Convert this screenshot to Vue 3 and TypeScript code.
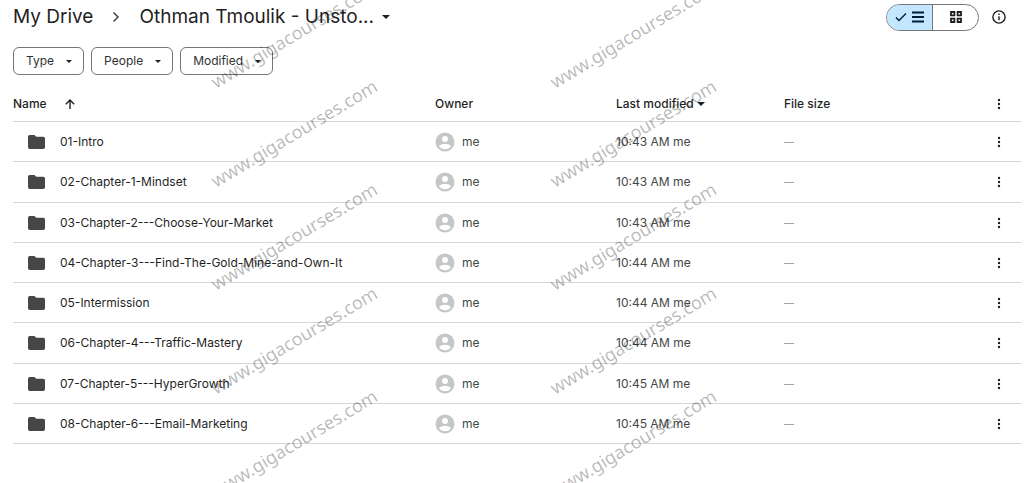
<script setup lang="ts">
interface Folder {
  name: string
  time: string
}

const filters: string[] = ['Type', 'People', 'Modified']

const folders: Folder[] = [
  { name: '01-Intro', time: '10:43 AM' },
  { name: '02-Chapter-1-Mindset', time: '10:43 AM' },
  { name: '03-Chapter-2---Choose-Your-Market', time: '10:43 AM' },
  { name: '04-Chapter-3---Find-The-Gold-Mine-and-Own-It', time: '10:44 AM' },
  { name: '05-Intermission', time: '10:44 AM' },
  { name: '06-Chapter-4---Traffic-Mastery', time: '10:44 AM' },
  { name: '07-Chapter-5---HyperGrowth', time: '10:45 AM' },
  { name: '08-Chapter-6---Email-Marketing', time: '10:45 AM' },
]

// Anchor points of the repeated diagonal mark
const markColumns: number[] = [216, 555]
const markRows: number[] = [89, 188, 291, 395, 498]
</script>

<template>
  <main class="drive">
    <header class="top">
      <nav class="crumbs" aria-label="Breadcrumb">
        <a class="crumb" href="#">My Drive</a>
        <svg class="chevron" viewBox="0 0 8 12" aria-hidden="true"><path d="M1.5 1.5 6 6l-4.500 4.500" /></svg>
        <button class="crumb current" type="button">
          <span>Othman Tmoulik - Unsto...</span>
          <svg class="caret big" viewBox="0 0 8 4" aria-hidden="true"><path d="M0 0h8L4 4z" /></svg>
        </button>
      </nav>
      <div class="tools">
        <div class="switch" role="group" aria-label="Layout">
          <button class="seg on" type="button" aria-label="List layout" aria-pressed="true">
            <svg class="check" viewBox="0 0 12 10" aria-hidden="true"><path d="M1 5.500 4 8.500 11 1.500" /></svg>
            <svg class="list" viewBox="0 0 12 12" aria-hidden="true"><path d="M0 1.500h12M0 6h12M0 10.500h12" /></svg>
          </button>
          <button class="seg" type="button" aria-label="Grid layout" aria-pressed="false">
            <svg class="grid" viewBox="0 0 12 12" aria-hidden="true">
              <path d="M1 1h3.400v3.400H1zM7.600 1H11v3.400H7.600zM1 7.600h3.400V11H1zM7.600 7.600H11V11H7.600z" />
            </svg>
          </button>
        </div>
        <button class="info" type="button" aria-label="View details">
          <svg viewBox="0 0 14 14" aria-hidden="true">
            <circle cx="7" cy="7" r="6.100" />
            <path d="M7 6.200v4.100M7 3.600v1.400" />
          </svg>
        </button>
      </div>
    </header>

    <div class="filters">
      <button v-for="f in filters" :key="f" class="chip" type="button">
        {{ f }}
        <svg class="caret" viewBox="0 0 8 4" aria-hidden="true"><path d="M0 0h8L4 4z" /></svg>
      </button>
    </div>

    <table class="files">
      <colgroup>
        <col />
        <col class="c-owner" />
        <col class="c-modified" />
        <col class="c-size" />
        <col class="c-more" />
      </colgroup>
      <thead>
        <tr>
          <th scope="col">
            <div class="cell name-head">
              Name
              <svg class="arrow" viewBox="0 0 10 10" aria-hidden="true"><path d="M5 10V1M.8 5.200 5 1l4.200 4.200" /></svg>
            </div>
          </th>
          <th scope="col">Owner</th>
          <th scope="col">
            <div class="cell sort-head">
              Last modified
              <svg class="caret big" viewBox="0 0 8 4" aria-hidden="true"><path d="M0 0h8L4 4z" /></svg>
            </div>
          </th>
          <th scope="col">File size</th>
          <th scope="col">
            <button class="more" type="button" aria-label="More options">
              <svg viewBox="0 0 4 12" aria-hidden="true">
                <circle cx="2" cy="2" r="1.200" /><circle cx="2" cy="6" r="1.200" /><circle cx="2" cy="10" r="1.200" />
              </svg>
            </button>
          </th>
        </tr>
      </thead>
      <tbody>
        <tr v-for="f in folders" :key="f.name">
          <td>
            <div class="cell name">
              <svg class="folder" viewBox="0 0 17 14" aria-hidden="true">
                <path d="M1.700 0H6.500L8.200 1.700H15.300A1.700 1.700 0 0 1 17 3.400V12.300A1.700 1.700 0 0 1 15.300 14H1.700A1.700 1.700 0 0 1 0 12.300V1.700A1.700 1.700 0 0 1 1.700 0z" />
              </svg>
              {{ f.name }}
            </div>
          </td>
          <td>
            <div class="cell owner">
              <svg class="avatar" viewBox="0 0 20 20" aria-hidden="true">
                <circle class="disc" cx="10" cy="10" r="9.500" />
                <circle class="person" cx="10" cy="7" r="3" />
                <path class="person" d="M4 14.300C5.200 12.400 7.700 11.700 10 11.700s4.800.7 6 2.600C14.700 16.200 12.500 17.300 10 17.300S5.300 16.200 4 14.300z" />
              </svg>
              me
            </div>
          </td>
          <td>{{ f.time }} me</td>
          <td class="size">—</td>
          <td>
            <button class="more" type="button" :aria-label="'Actions for ' + f.name">
              <svg viewBox="0 0 4 12" aria-hidden="true">
                <circle cx="2" cy="2" r="1.200" /><circle cx="2" cy="6" r="1.200" /><circle cx="2" cy="10" r="1.200" />
              </svg>
            </button>
          </td>
        </tr>
      </tbody>
    </table>

    <svg class="marks" aria-hidden="true">
      <template v-for="x in markColumns" :key="x">
        <text v-for="y in markRows" :key="y" :transform="`translate(${x} ${y}) rotate(-31)`">www.gigacourses.com</text>
      </template>
    </svg>
  </main>
</template>

<style>
body {
  margin: 0;
  background: #fff;
}
</style>

<style scoped>
.drive {
  position: relative;
  min-height: 100vh;
  box-sizing: border-box;
  padding: 0 3px 0 13px;
  overflow: hidden;
  font-family: Inter, "Open Sans", sans-serif;
  font-size: 12px;
  line-height: 16px;
  color: #1f1f1f;
}
button {
  margin: 0;
  padding: 0;
  border: 0;
  background: none;
  font: inherit;
  color: inherit;
}
svg {
  display: block;
  flex: none;
}
.top {
  display: flex;
  align-items: center;
  justify-content: space-between;
  height: 34px;
}
.crumbs,
.tools,
.filters,
.cell {
  display: flex;
  align-items: center;
}
.crumb {
  font-size: 19px;
  line-height: 24px;
  color: #1f1f1f;
  text-decoration: none;
}
.chevron {
  width: 8px;
  height: 12px;
  margin: 0 19px;
  fill: none;
  stroke: #444746;
  stroke-width: 1.5;
}
.current {
  display: flex;
  align-items: center;
  gap: 8px;
}
.caret {
  width: 6px;
  height: 3px;
  fill: #1f1f1f;
}
.caret.big {
  width: 8px;
  height: 4px;
}
.tools {
  gap: 13px;
  padding-right: 15px;
}
.switch {
  display: flex;
  box-sizing: border-box;
  width: 93px;
  height: 27px;
  border: 1px solid #747775;
  border-radius: 14px;
  overflow: hidden;
}
.seg {
  flex: 1;
  display: flex;
  align-items: center;
  justify-content: center;
  gap: 5px;
}
.seg.on {
  background: #c2e7ff;
  border-right: 1px solid #747775;
}
.check {
  width: 12px;
  height: 10px;
  fill: none;
  stroke: #001d35;
  stroke-width: 1.4;
}
.list {
  width: 12px;
  height: 12px;
  fill: none;
  stroke: #001d35;
  stroke-width: 1.8;
}
.grid {
  width: 12px;
  height: 12px;
  fill: none;
  stroke: #1f1f1f;
  stroke-width: 1.8;
}
.info svg {
  width: 14px;
  height: 14px;
  fill: none;
  stroke: #1f1f1f;
  stroke-width: 1.4;
}
.filters {
  gap: 7px;
  padding-top: 13px;
}
.chip {
  display: flex;
  align-items: center;
  gap: 12px;
  height: 28px;
  padding: 0 11px 0 12px;
  border: 1px solid #747775;
  border-radius: 6px;
  color: #303332;
}
.files {
  width: 100%;
  margin-top: 12px;
  border-collapse: collapse;
  table-layout: fixed;
}
.c-owner {
  width: 181px;
}
.c-modified {
  width: 168px;
}
.c-size {
  width: 205px;
}
.c-more {
  width: 32px;
}
th,
td {
  padding: 0;
  text-align: left;
  border-bottom: 1px solid #d5d7d6;
}
th {
  height: 34px;
  font-weight: 500;
}
td {
  height: 39px;
  color: #444746;
}
tbody tr:nth-child(4n + 2) td {
  height: 40px;
}
.name-head {
  gap: 18px;
}
.sort-head {
  gap: 3px;
}
.arrow {
  width: 10px;
  height: 10px;
  fill: none;
  stroke: #1f1f1f;
  stroke-width: 1.4;
}
.name {
  gap: 15px;
  padding-left: 15px;
  color: #1f1f1f;
  white-space: nowrap;
}
.folder {
  width: 17px;
  height: 14px;
  fill: #444746;
}
.owner {
  gap: 7px;
}
.avatar {
  width: 20px;
  height: 20px;
}
.disc {
  fill: #c4c7c5;
}
.person {
  fill: #fff;
}
.size {
  font-size: 10px;
  color: #8e918f;
}
.more {
  display: block;
  padding: 2px 8px;
}
.more svg {
  width: 4px;
  height: 12px;
  fill: #1f1f1f;
}
.marks {
  position: absolute;
  inset: 0;
  width: 100%;
  height: 100%;
  pointer-events: none;
}
.marks text {
  font-family: "Noto Sans", sans-serif;
  font-size: 18px;
  fill: #000;
  fill-opacity: 0.28;
}
</style>
